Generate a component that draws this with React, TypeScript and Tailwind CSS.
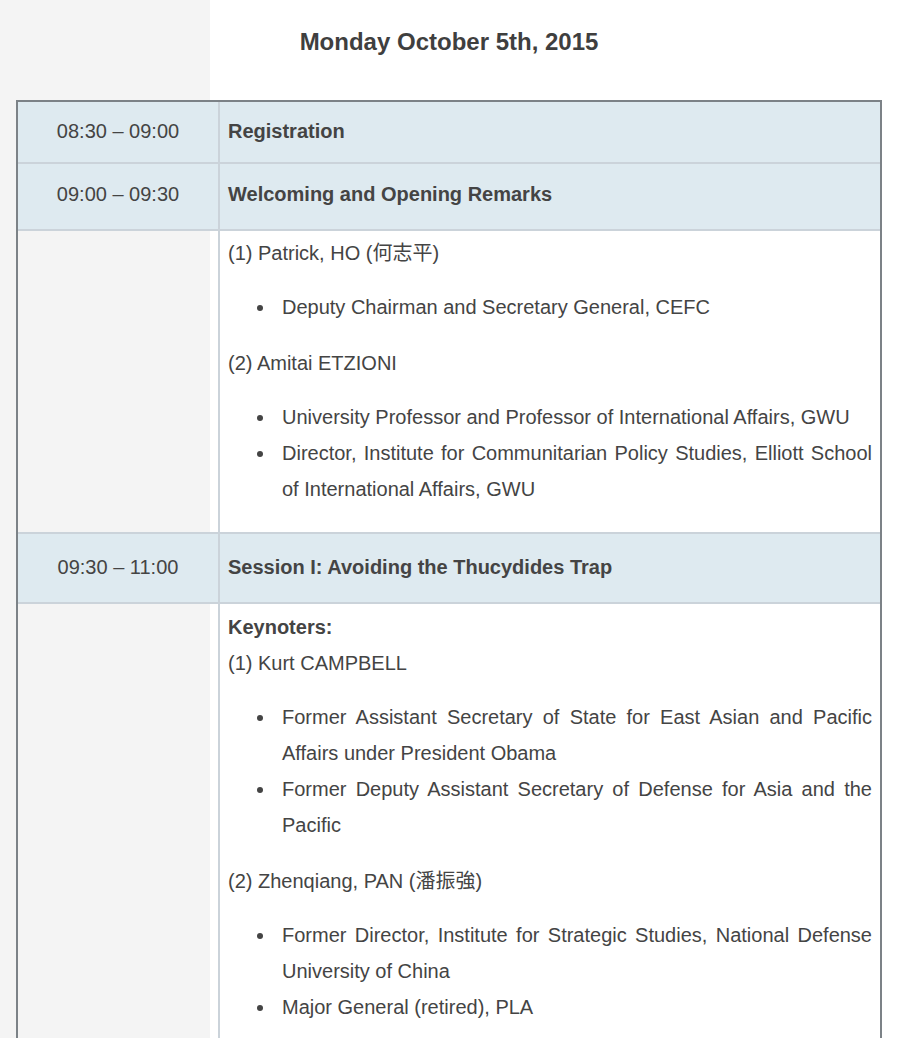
type Person = {
  name: string;
  roles: string[];
};

type Row = {
  time?: string;
  title?: string;
  highlight?: boolean;
  box?: string;
  lead?: string;
  pad?: string;
  people?: Person[];
};

const rows: Row[] = [
  { time: "08:30 – 09:00", title: "Registration", highlight: true, box: "h-[60px] pt-[11px]" },
  { time: "09:00 – 09:30", title: "Welcoming and Opening Remarks", highlight: true, box: "h-[65px] pt-[12px]" },
  {
    pad: "pt-[4px]",
    people: [
      { name: "(1) Patrick, HO (何志平)", roles: ["Deputy Chairman and Secretary General, CEFC"] },
      {
        name: "(2) Amitai ETZIONI",
        roles: [
          "University Professor and Professor of International Affairs, GWU",
          "Director, Institute for Communitarian Policy Studies, Elliott School of International Affairs, GWU",
        ],
      },
    ],
  },
  {
    time: "09:30 – 11:00",
    title: "Session I: Avoiding the Thucydides Trap",
    highlight: true,
    box: "h-[68px] pt-[15px]",
  },
  {
    lead: "Keynoters:",
    pad: "pt-[5px]",
    people: [
      {
        name: "(1) Kurt CAMPBELL",
        roles: [
          "Former Assistant Secretary of State for East Asian and Pacific Affairs under President Obama",
          "Former Deputy Assistant Secretary of Defense for Asia and the Pacific",
        ],
      },
      {
        name: "(2) Zhenqiang, PAN (潘振強)",
        roles: [
          "Former Director, Institute for Strategic Studies, National Defense University of China",
          "Major General (retired), PLA",
        ],
      },
    ],
  },
];

function PeopleCell({ lead, pad, people }: { lead?: string; pad?: string; people: Person[] }) {
  return (
    <div className={`pl-[8px] pr-[8px] pb-[7px] ${pad ?? ""}`}>
      {people.map((person, i) => (
        <div key={person.name}>
          <p className={i === 0 ? "mb-[18px]" : "mt-[20px] mb-[18px]"}>
            {i === 0 && lead ? (
              <>
                <strong className="font-bold">{lead}</strong>
                <br />
              </>
            ) : null}
            {person.name}
          </p>
          <ul className="my-[18px] pl-[29px]">
            {person.roles.map((role) => (
              <li key={role} className="flex">
                <span className="w-[25px] shrink-0 pt-[16px]">
                  <span className="block h-[6px] w-[6px] rounded-full bg-[#444]" />
                </span>
                <span className="flex-1 text-justify">{role}</span>
              </li>
            ))}
          </ul>
        </div>
      ))}
    </div>
  );
}

export default function App() {
  return (
    <div
      className="w-full bg-[linear-gradient(to_right,#f4f4f4_210px,#ffffff_210px)] pb-10 text-[#444] text-[20px] leading-[36px]"
      style={{ fontFamily: '"Liberation Sans", Arial, "Noto Sans CJK SC", sans-serif' }}
    >
      <div className="flex h-[100px] items-start justify-center pt-[24px]">
        <h1 className="text-[24px] font-bold leading-[36px] text-[#3f3f3f]">Monday October 5th, 2015</h1>
      </div>

      <div className="ml-[16px] w-[866px] border-2 border-[#7c8287]">
        {rows.map((row, i) => (
          <div
            key={i}
            className={`grid grid-cols-[202px_1fr] ${i < rows.length - 1 ? "border-b-2 border-[#cbd3da]" : ""} ${
              row.highlight ? "bg-[#deeaf0]" : ""
            }`}
          >
            <div className={`border-r-2 border-[#cbd3da] text-center ${row.box ?? ""}`}>{row.time}</div>
            {row.people ? (
              <PeopleCell lead={row.lead} pad={row.pad} people={row.people} />
            ) : (
              <div className={`pl-[8px] font-bold ${row.box ?? ""}`}>{row.title}</div>
            )}
          </div>
        ))}
      </div>
    </div>
  );
}
